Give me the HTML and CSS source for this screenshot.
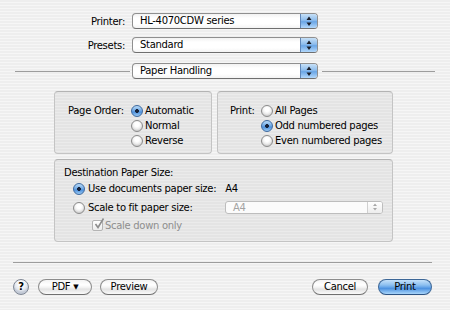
FILE: index.html
```html
<!DOCTYPE html>
<html lang="en">
<head>
    <meta charset="UTF-8">
    <meta name="viewport" content="width=device-width, initial-scale=1.0">
    <title>Print</title>
    <link rel="stylesheet" href="styles.css">
</head>
<body>
    <div class="sheet">
        <div class="field first">
            <span class="field-label">Printer:</span>
            <div class="popup">
                <span class="popup-value">HL-4070CDW series</span>
                <span class="popup-arrows">
                    <svg width="16" height="16" viewBox="0 0 16 16"><path d="M5.5 7 L8 3.5 L10.5 7 Z M5.5 9.5 L8 13 L10.5 9.5 Z" fill="#1b1f2a"/></svg>
                </span>
            </div>
        </div>
        <div class="field">
            <span class="field-label">Presets:</span>
            <div class="popup">
                <span class="popup-value">Standard</span>
                <span class="popup-arrows">
                    <svg width="16" height="16" viewBox="0 0 16 16"><path d="M5.5 7 L8 3.5 L10.5 7 Z M5.5 9.5 L8 13 L10.5 9.5 Z" fill="#1b1f2a"/></svg>
                </span>
            </div>
        </div>
        <div class="pane-row">
            <span class="rule left"></span>
            <div class="popup">
                <span class="popup-value">Paper Handling</span>
                <span class="popup-arrows">
                    <svg width="16" height="16" viewBox="0 0 16 16"><path d="M5.5 7 L8 3.5 L10.5 7 Z M5.5 9.5 L8 13 L10.5 9.5 Z" fill="#1b1f2a"/></svg>
                </span>
            </div>
            <span class="rule right"></span>
        </div>

        <div class="groups">
            <div class="group-row">
                <div class="group order">
                    <span class="group-label order-label">Page Order:</span>
                    <div class="choices">
                        <div class="choice"><span class="radio on"></span>Automatic</div>
                        <div class="choice"><span class="radio"></span>Normal</div>
                        <div class="choice"><span class="radio"></span>Reverse</div>
                    </div>
                </div>
                <div class="group pages">
                    <span class="group-label pages-label">Print:</span>
                    <div class="choices">
                        <div class="choice"><span class="radio"></span>All Pages</div>
                        <div class="choice"><span class="radio on"></span>Odd numbered pages</div>
                        <div class="choice"><span class="radio"></span>Even numbered pages</div>
                    </div>
                </div>
            </div>
            <div class="group dest">
                <div class="dest-title">Destination Paper Size:</div>
                <div class="dest-row first-opt">
                    <span class="radio on"></span>
                    <span>Use documents paper size:</span>
                    <span class="dest-size">A4</span>
                </div>
                <div class="dest-row second-opt">
                    <span class="radio"></span>
                    <span class="dest-text">Scale to fit paper size:</span>
                    <div class="popup small disabled">
                        <span class="popup-value">A4</span>
                        <span class="popup-arrows">
                            <svg width="12" height="12" viewBox="0 0 12 12"><path d="M4 5 L6 2.5 L8 5 Z M4 7 L6 9.5 L8 7 Z" fill="#a8a8a8"/></svg>
                        </span>
                    </div>
                </div>
                <div class="dest-row third-opt">
                    <span class="check">
                        <svg width="12" height="12" viewBox="0 0 12 12"><path d="M2.5 6 L5 9.5 L10.5 0.5" fill="none" stroke="#8d8d8d" stroke-width="1.6"/></svg>
                    </span>
                    <span class="muted">Scale down only</span>
                </div>
            </div>
        </div>

        <div class="footer-rule"></div>
        <div class="buttons">
            <span class="help">?</span>
            <span class="btn pdf">PDF <span class="tri">&#9660;</span></span>
            <span class="btn preview">Preview</span>
            <span class="spacer"></span>
            <span class="btn cancel">Cancel</span>
            <span class="btn print">Print</span>
        </div>
    </div>
</body>
</html>
```

FILE: styles.css
```css
html, body {
    margin: 0;
    padding: 0;
}
body {
    width: 450px;
    height: 310px;
    overflow: hidden;
    font-family: "DejaVu Sans", Verdana, sans-serif;
    font-size: 10px;
    letter-spacing: -0.3px;
    color: #000;
    background: repeating-linear-gradient(#eeeeee 0 2px, #f6f6f6 2px 3px);
}
.sheet {
    padding-top: 13px;
}

/* top popups */
.field {
    display: flex;
    align-items: center;
    height: 16px;
    margin-top: 8px;
}
.field.first {
    margin-top: 0;
}
.field-label {
    width: 125px;
    margin-right: 7px;
    text-align: right;
}
.popup {
    display: flex;
    align-items: stretch;
    width: 186px;
    height: 16px;
    box-sizing: border-box;
    border: 1px solid #8f8f8f;
    border-bottom-color: #6f6f6f;
    border-radius: 4px;
    background: linear-gradient(#f2f2f2, #ffffff 30%, #ffffff 70%, #f4f4f4);
    overflow: hidden;
}
.popup-value {
    flex: 1;
    padding-left: 7px;
    line-height: 14px;
}
.popup-arrows {
    width: 16px;
    display: flex;
    align-items: center;
    justify-content: center;
    border-left: 1px solid #5f86b8;
    background: linear-gradient(#c6e0f7, #8dbcec 45%, #6aa6e6 55%, #b3d8fb);
}
.popup-arrows svg {
    display: block;
    margin-top: -1px;
}
.pane-row {
    display: flex;
    align-items: center;
    height: 16px;
    margin: 10px 15px 0 15px;
}
.rule {
    height: 1px;
    background: #9d9d9d;
}
.rule.left {
    width: 115px;
    margin-right: 2px;
}
.rule.right {
    flex: 1;
    margin-left: 4px;
}

/* group boxes */
.groups {
    width: 339px;
    margin: 12px 0 0 54px;
}
.group-row {
    display: flex;
    gap: 5px;
}
.group {
    box-sizing: border-box;
    border: 1px solid #c4c4c4;
    border-top-color: #b3b3b3;
    border-radius: 4px;
    background: repeating-linear-gradient(#e4e4e4 0 2px, #ebebeb 2px 3px);
}
.order, .pages {
    display: flex;
    height: 63px;
    padding-top: 11px;
}
.order {
    width: 158px;
    padding-left: 13px;
}
.pages {
    flex: 1;
    padding-left: 12px;
}
.group-label {
    line-height: 15px;
}
.order-label {
    width: 63px;
}
.pages-label {
    width: 31px;
}
.choice {
    display: flex;
    align-items: center;
    height: 15px;
}
.radio {
    width: 12px;
    height: 12px;
    box-sizing: border-box;
    flex: none;
    margin-right: 2px;
    border: 1px solid #8b8b8b;
    border-radius: 50%;
    background: radial-gradient(circle at 50% 35%, #ffffff 0 2px, #f0f0f0 4px, #d2d2d2 6px);
}
.radio.on {
    border-color: #3f6a9f;
    background:
        radial-gradient(circle, #16223a 0 1.6px, transparent 2.2px),
        linear-gradient(#b9dbf8, #6aa5e4 50%, #4c8fdb 60%, #9bcaf3);
}

.dest {
    height: 83px;
    margin-top: 5px;
    padding: 5px 9px 0 9px;
}
.dest-title {
    line-height: 15px;
}
.dest-row {
    display: flex;
    align-items: center;
    padding-left: 9px;
}
.dest-row .radio {
    margin-right: 3px;
}
.first-opt {
    height: 15px;
    margin-top: 1px;
}
.dest-size {
    margin-left: 9px;
}
.second-opt {
    height: 17px;
    margin-top: 3px;
}
.dest-text {
    width: 137px;
}
.popup.small {
    width: 158px;
    height: 13px;
    border-radius: 3px;
}
.popup.disabled {
    border-color: #bdbdbd;
    background: #fbfbfb;
    color: #a3a3a3;
}
.popup.disabled .popup-value {
    line-height: 11px;
}
.popup.disabled .popup-arrows {
    width: 14px;
    border-left: 1px solid #d0d0d0;
    background: linear-gradient(#ffffff, #ededed);
}
.third-opt {
    height: 15px;
    margin-top: 2px;
    padding-left: 28px;
}
.check {
    width: 11px;
    height: 11px;
    box-sizing: border-box;
    margin-right: 2px;
    border: 1px solid #b4b4b4;
    border-radius: 2px;
    background: linear-gradient(#ffffff, #ececec);
    position: relative;
}
.check svg {
    position: absolute;
    left: 0;
    top: -3px;
}
.muted {
    color: #8e8e8e;
}

/* bottom bar */
.footer-rule {
    height: 1px;
    margin: 20px 18px 0 13px;
    background: #9d9d9d;
}
.buttons {
    display: flex;
    align-items: center;
    height: 16px;
    margin: 16px 18px 0 13px;
}
.help {
    width: 16px;
    height: 16px;
    box-sizing: border-box;
    border: 1px solid #7f8795;
    border-radius: 50%;
    background: radial-gradient(circle at 50% 30%, #ffffff 0 2px, #e4e8ef 6px, #c3cad6 8px);
    font-weight: bold;
    font-size: 10px;
    line-height: 14px;
    text-align: center;
    margin-right: 9px;
}
.btn {
    height: 16px;
    box-sizing: border-box;
    border: 1px solid #8c8c8c;
    border-bottom-color: #707070;
    border-radius: 8px;
    background: linear-gradient(#f3f3f3, #ffffff 35%, #f1f1f1 55%, #e2e2e2 65%, #fbfbfb);
    line-height: 14px;
    text-align: center;
}
.pdf {
    width: 54px;
    margin-right: 8px;
}
.tri {
    font-size: 7px;
    vertical-align: 1px;
}
.preview {
    width: 58px;
}
.spacer {
    flex: 1;
}
.cancel {
    width: 56px;
    margin-right: 10px;
}
.print {
    width: 54px;
    border-color: #3d6797;
    border-bottom-color: #2c5383;
    background: linear-gradient(#c4e1fa, #8fc1f0 35%, #6aa8ea 50%, #4d92e0 60%, #a8d5fb);
}
```
